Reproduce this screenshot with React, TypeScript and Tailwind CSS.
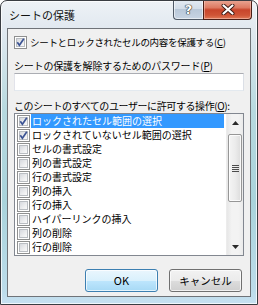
import React from "react";

function Check({ checked }: { checked: boolean }) {
  return (
    <span className="relative block w-[13px] h-[13px] shrink-0 border border-[#8e8f8f] bg-white">
      <span className="absolute left-[1px] top-[1px] w-[9px] h-[9px] border border-[#b9bdc2] bg-[linear-gradient(135deg,#d6d9de_0%,#ebecee_55%,#fafafa_100%)]" />
      {checked && (
        <svg className="absolute left-0 top-0" width="11" height="11" viewBox="0 0 11 11">
          <path d="M2.3 5.3 L4.4 8.2 L8.8 1.8" fill="none" stroke="#3c5494" strokeWidth="1.7" strokeLinejoin="miter" />
        </svg>
      )}
    </span>
  );
}

const rows = [
  "ロックされたセル範囲の選択",
  "ロックされていないセル範囲の選択",
  "セルの書式設定",
  "列の書式設定",
  "行の書式設定",
  "列の挿入",
  "行の挿入",
  "ハイパーリンクの挿入",
  "列の削除",
  "行の削除",
];

export default function App() {
  return (
    <div
      className="relative w-[258px] h-[305px] overflow-hidden rounded-t-[7px] border border-[#3a3d42] bg-[linear-gradient(to_bottom,#eef2f6_0px,#e2e9f0_26px,#b7d9df_110px,#a9d3db_200px,#bcdcea_290px,#c9e1f2_305px)] shadow-[inset_0_0_0_1px_rgba(255,255,255,0.75)] text-black"
      style={{ fontFamily: "'Noto Sans CJK JP', 'Noto Sans', sans-serif" }}
    >
      {/* title bar */}
      <div className="h-[27px] flex items-start pt-[6px] pl-[8px] text-[11px] leading-[16px] text-[#111] whitespace-nowrap">
        シートの保護
      </div>

      {/* caption buttons */}
      <div className="absolute top-[-1px] right-[5px] flex h-[20px]">
        <div className="relative w-[30px] h-[20px] rounded-bl-[4px] border border-t-0 border-r-0 border-[#4f5966] bg-[linear-gradient(to_bottom,#e4ebf3_0%,#d3dde9_45%,#b9c8d9_50%,#c7d4e3_100%)] shadow-[inset_0_0_0_1px_rgba(255,255,255,0.55)] flex items-center justify-center">
          <span className="text-[13px] font-bold leading-none text-white [text-shadow:0_0_1px_#222,0_0_1px_#222,0_0_1px_#222]" style={{ fontFamily: "'DejaVu Sans', sans-serif" }}>
            ?
          </span>
        </div>
        <div className="relative w-[49px] h-[20px] rounded-br-[4px] border border-t-0 border-[#4a1e16] bg-[linear-gradient(to_bottom,#e9a896_0%,#dd7a62_40%,#c8452b_52%,#cf5436_80%,#e07a58_100%)] shadow-[inset_0_0_0_1px_rgba(255,220,210,0.45)] flex items-center justify-center">
          <svg width="14" height="11" viewBox="0 0 14 11">
            <path d="M2.5 1.5 L11.5 9.5 M11.5 1.5 L2.5 9.5" stroke="#3b1a14" strokeWidth="4" strokeLinecap="round" />
            <path d="M2.5 1.5 L11.5 9.5 M11.5 1.5 L2.5 9.5" stroke="#ffffff" strokeWidth="2.2" strokeLinecap="round" />
          </svg>
        </div>
      </div>

      {/* client area */}
      <div className="mx-[6px] h-[269px] border border-[#6f7378] bg-[#f0f0f0] text-[10px] leading-[13px] whitespace-nowrap">
        <div className="flex items-center h-[13px] mt-[7px] pl-[6px]">
          <Check checked />
          <span className="ml-[3px] w-[212px] shrink-0 text-[9.5px] tracking-[-0.3px]">
            シートとロックされたセルの内容を保護する(<u>C</u>)
          </span>
        </div>

        <div className="h-[13px] mt-[10px] pl-[6px] tracking-[-0.2px]">
          シートの保護を解除するためのパスワード(<u>P</u>)
        </div>

        <div className="mt-[1px] ml-[6px] w-[230px] h-[18px] border border-[#abadb3] border-l-[#e2e3ea] border-r-[#dbdfe6] border-b-[#e3e9ef] bg-white" />

        <div className="h-[13px] mt-[8px] pl-[6px] tracking-[-0.4px]">
          このシートのすべてのユーザーに許可する操作(<u>O</u>):
        </div>

        <div className="mt-[1px] ml-[6px] w-[230px] h-[143px] border border-[#828790] bg-white flex">
          <div className="flex-1 flex flex-col overflow-hidden">
            {rows.map((r, i) => (
              <div key={r} className="h-[14px] shrink-0 flex items-center pl-[2px]">
                <Check checked={i < 2} />
                <span
                  className={
                    i === 0
                      ? "ml-[1px] mr-[2px] flex-1 h-[14px] pl-[1px] bg-[#3399ff] text-white leading-[14px] whitespace-nowrap"
                      : "ml-[1px] mr-[2px] flex-1 h-[14px] pl-[1px] leading-[14px] whitespace-nowrap"
                  }
                >
                  {r}
                </span>
              </div>
            ))}
          </div>
          {/* scrollbar */}
          <div className="w-[17px] h-full flex flex-col bg-[linear-gradient(to_right,#e7e7e7,#f3f3f3_30%,#f3f3f3_70%,#ebebeb)] border-l border-[#ececec]">
            <div className="h-[17px] flex items-center justify-center">
              <svg width="7" height="4" viewBox="0 0 7 4">
                <path d="M0 4 L3.5 0 L7 4 Z" fill="#2b2b2b" />
              </svg>
            </div>
            <div className="mt-[3px] mx-[1px] h-[68px] rounded-[2px] border border-[#979797] bg-[linear-gradient(to_right,#f4f4f4,#ececec_50%,#dcdcdc)] shadow-[inset_0_0_0_1px_rgba(255,255,255,0.8)] flex flex-col items-center justify-center gap-[1px]">
              <span className="block w-[7px] h-[1px] bg-[#4b4b4b]" />
              <span className="block w-[7px] h-[1px] bg-[#4b4b4b]" />
              <span className="block w-[7px] h-[1px] bg-[#4b4b4b]" />
              <span className="block w-[7px] h-[1px] bg-[#4b4b4b]" />
            </div>
            <div className="flex-1" />
            <div className="h-[17px] flex items-center justify-center">
              <svg width="7" height="4" viewBox="0 0 7 4">
                <path d="M0 0 L7 0 L3.5 4 Z" fill="#2b2b2b" />
              </svg>
            </div>
          </div>
        </div>

        <div className="mt-[13px] flex justify-end gap-[11px] pr-[8px]">
          <div className="w-[73px] h-[23px] rounded-[3px] border border-[#3c7fb1] bg-[linear-gradient(to_bottom,#eaf6fd_0%,#d9f0fc_50%,#bee6fd_51%,#a7d9f5_100%)] shadow-[inset_0_0_0_1px_rgba(255,255,255,0.7)] flex items-center justify-center text-[11px]">
            OK
          </div>
          <div className="w-[73px] h-[23px] rounded-[3px] border border-[#707070] bg-[linear-gradient(to_bottom,#f2f2f2_0%,#ebebeb_50%,#dddddd_51%,#cfcfcf_100%)] shadow-[inset_0_0_0_1px_rgba(255,255,255,0.7)] flex items-center justify-center text-[10.5px]">
            キャンセル
          </div>
        </div>
      </div>
    </div>
  );
}
